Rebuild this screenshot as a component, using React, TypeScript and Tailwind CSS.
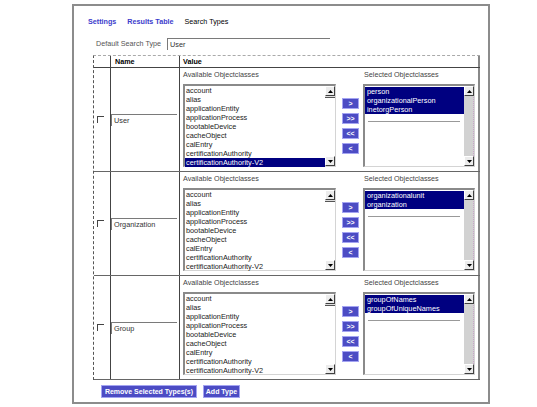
import React from 'react';

const AVAILABLE = [
  'account',
  'alias',
  'applicationEntity',
  'applicationProcess',
  'bootableDevice',
  'cacheObject',
  'calEntry',
  'certificationAuthority',
  'certificationAuthority-V2',
];

type SearchType = {
  name: string;
  selected: string[];
  active?: string;
};

const TYPES: SearchType[] = [
  { name: 'User', selected: ['person', 'organizationalPerson', 'inetorgPerson'], active: 'certificationAuthority-V2' },
  { name: 'Organization', selected: ['organizationalunit', 'organization'] },
  { name: 'Group', selected: ['groupOfNames', 'groupOfUniqueNames'] },
];

const ScrollArrow = ({ dir }: { dir: 'up' | 'down' }) => (
  <div className="w-[10px] h-[10px] bg-[#ececec] border border-t-white border-l-white border-r-[#404040] border-b-[#404040] flex items-center justify-center">
    <svg width="5" height="3" viewBox="0 0 5 3">
      <path d={dir === 'up' ? 'M2.5 0L5 3H0z' : 'M0 0h5L2.5 3z'} fill="#000" />
    </svg>
  </div>
);

const MoveButton = ({ label }: { label: string }) => (
  <button className="w-[17px] h-[11px] bg-[#4c4cc4] border border-[#a4a4f2] text-white text-[7px] font-bold leading-none flex items-center justify-center">
    {label}
  </button>
);

const AvailableList = ({ active }: { active?: string }) => (
  <div className="flex w-[153px] h-[83px] bg-white border-t-2 border-l-2 border-t-[#8a8a8a] border-l-[#8a8a8a] border-b border-r border-b-[#d4d4d4] border-r-[#d4d4d4]">
    <div className="flex-1">
      {AVAILABLE.map((item) => (
        <div
          key={item}
          className={`h-[9px] leading-[9px] pl-[1px] ${active === item ? 'bg-[#000080] text-white' : 'text-[#222]'}`}
        >
          {item}
        </div>
      ))}
    </div>
    <div className="w-[10px] flex flex-col justify-between">
      <div>
        <ScrollArrow dir="up" />
        <div className="h-[2px] border-b border-[#555] bg-[#ddd]" />
      </div>
      <ScrollArrow dir="down" />
    </div>
  </div>
);

const SelectedList = ({ items }: { items: string[] }) => (
  <div className="flex w-[112px] h-[83px] bg-white border-t-2 border-l-2 border-t-[#8a8a8a] border-l-[#8a8a8a] border-b border-r border-b-[#d4d4d4] border-r-[#d4d4d4]">
    <div className="flex-1 pt-[1px]">
      {items.map((item) => (
        <div key={item} className="h-[9px] leading-[9px] pl-[2px] bg-[#000080] text-white">
          {item}
        </div>
      ))}
      <div className="h-px bg-[#999] ml-[3px] mr-[4px] mt-[7px]" />
    </div>
    <div className="w-[10px] flex flex-col justify-between bg-[#d2d2d2] border-r border-dotted border-[#c9a3c9]">
      <ScrollArrow dir="up" />
      <ScrollArrow dir="down" />
    </div>
  </div>
);

export default function App() {
  return (
    <div className="w-[537px] h-[407px] bg-white pt-[4px] font-['Liberation_Sans',Arial,sans-serif]">
      <div className="ml-[72px] w-[418px] h-[400px] border-2 border-[#8c8c8c]">
        {/* tabs */}
        <div className="mt-[11px] pl-[14px] flex gap-[11px] text-[7.2px] leading-[10px]">
          <span className="font-bold text-[#3c3ccc]">Settings</span>
          <span className="font-bold text-[#3c3ccc]">Results Table</span>
          <span className="text-black">Search Types</span>
        </div>

        {/* default type */}
        <div className="mt-[11px] pl-[22px] flex items-center h-[12px]">
          <span className="w-[71px] text-[7.2px] text-[#555]">Default Search Type</span>
          <div className="w-[163px] h-[12px] border-t border-l border-[#7a7a7a] pl-[2px] text-[7.3px] leading-[11px] text-[#333]">
            User
          </div>
        </div>

        {/* table */}
        <div className="mt-[5px] ml-[19px] w-[387px] border-t border-l border-dashed border-t-[#aaa] border-l-[#555] text-[7.3px]">
          <div className="flex h-[12px] border-b border-[#444] font-bold text-[7.2px] leading-[11px] text-black">
            <div className="w-[17px] border-r border-[#444]" />
            <div className="w-[69px] border-r border-[#444] pl-[4px]">Name</div>
            <div className="w-[300px] border-r-2 border-[#888] pl-[3px]">Value</div>
          </div>

          {TYPES.map((t) => (
            <div key={t.name} className="flex h-[104px] border-b border-[#666]">
              <div className="w-[17px] border-r border-[#444] flex items-center pl-[3px]">
                <div className="w-[7px] h-[7px] border-t border-l border-[#444] bg-white" />
              </div>
              <div className="w-[69px] border-r border-[#444] flex items-center">
                <div className="w-[66px] h-[12px] border-t border-l border-[#7a7a7a] pl-[2px] text-[7.3px] leading-[11px] text-[#333]">
                  {t.name}
                </div>
              </div>
              <div className="w-[300px] border-r-2 border-[#888] pt-[2px] pl-[3px]">
                <div className="flex h-[9px] leading-[9px] text-[7.2px] text-[#444]">
                  <span className="w-[181px]">Available Objectclasses</span>
                  <span>Selected Objectclasses</span>
                </div>
                <div className="mt-[5px] flex items-center">
                  <AvailableList active={t.active} />
                  <div className="ml-[6px] flex flex-col gap-[4px]">
                    <MoveButton label=">" />
                    <MoveButton label=">>" />
                    <MoveButton label="<<" />
                    <MoveButton label="<" />
                  </div>
                  <div className="ml-[4px]">
                    <SelectedList items={t.selected} />
                  </div>
                </div>
              </div>
            </div>
          ))}
        </div>

        {/* actions */}
        <div className="mt-[5px] ml-[27px] flex gap-[6px]">
          <button className="w-[96px] h-[13px] bg-[#4c4cc4] border border-[#a4a4f2] text-white text-[7px] font-bold leading-none">
            Remove Selected Types(s)
          </button>
          <button className="w-[37px] h-[13px] bg-[#4c4cc4] border border-[#a4a4f2] text-white text-[7px] font-bold leading-none">
            Add Type
          </button>
        </div>
      </div>
    </div>
  );
}
